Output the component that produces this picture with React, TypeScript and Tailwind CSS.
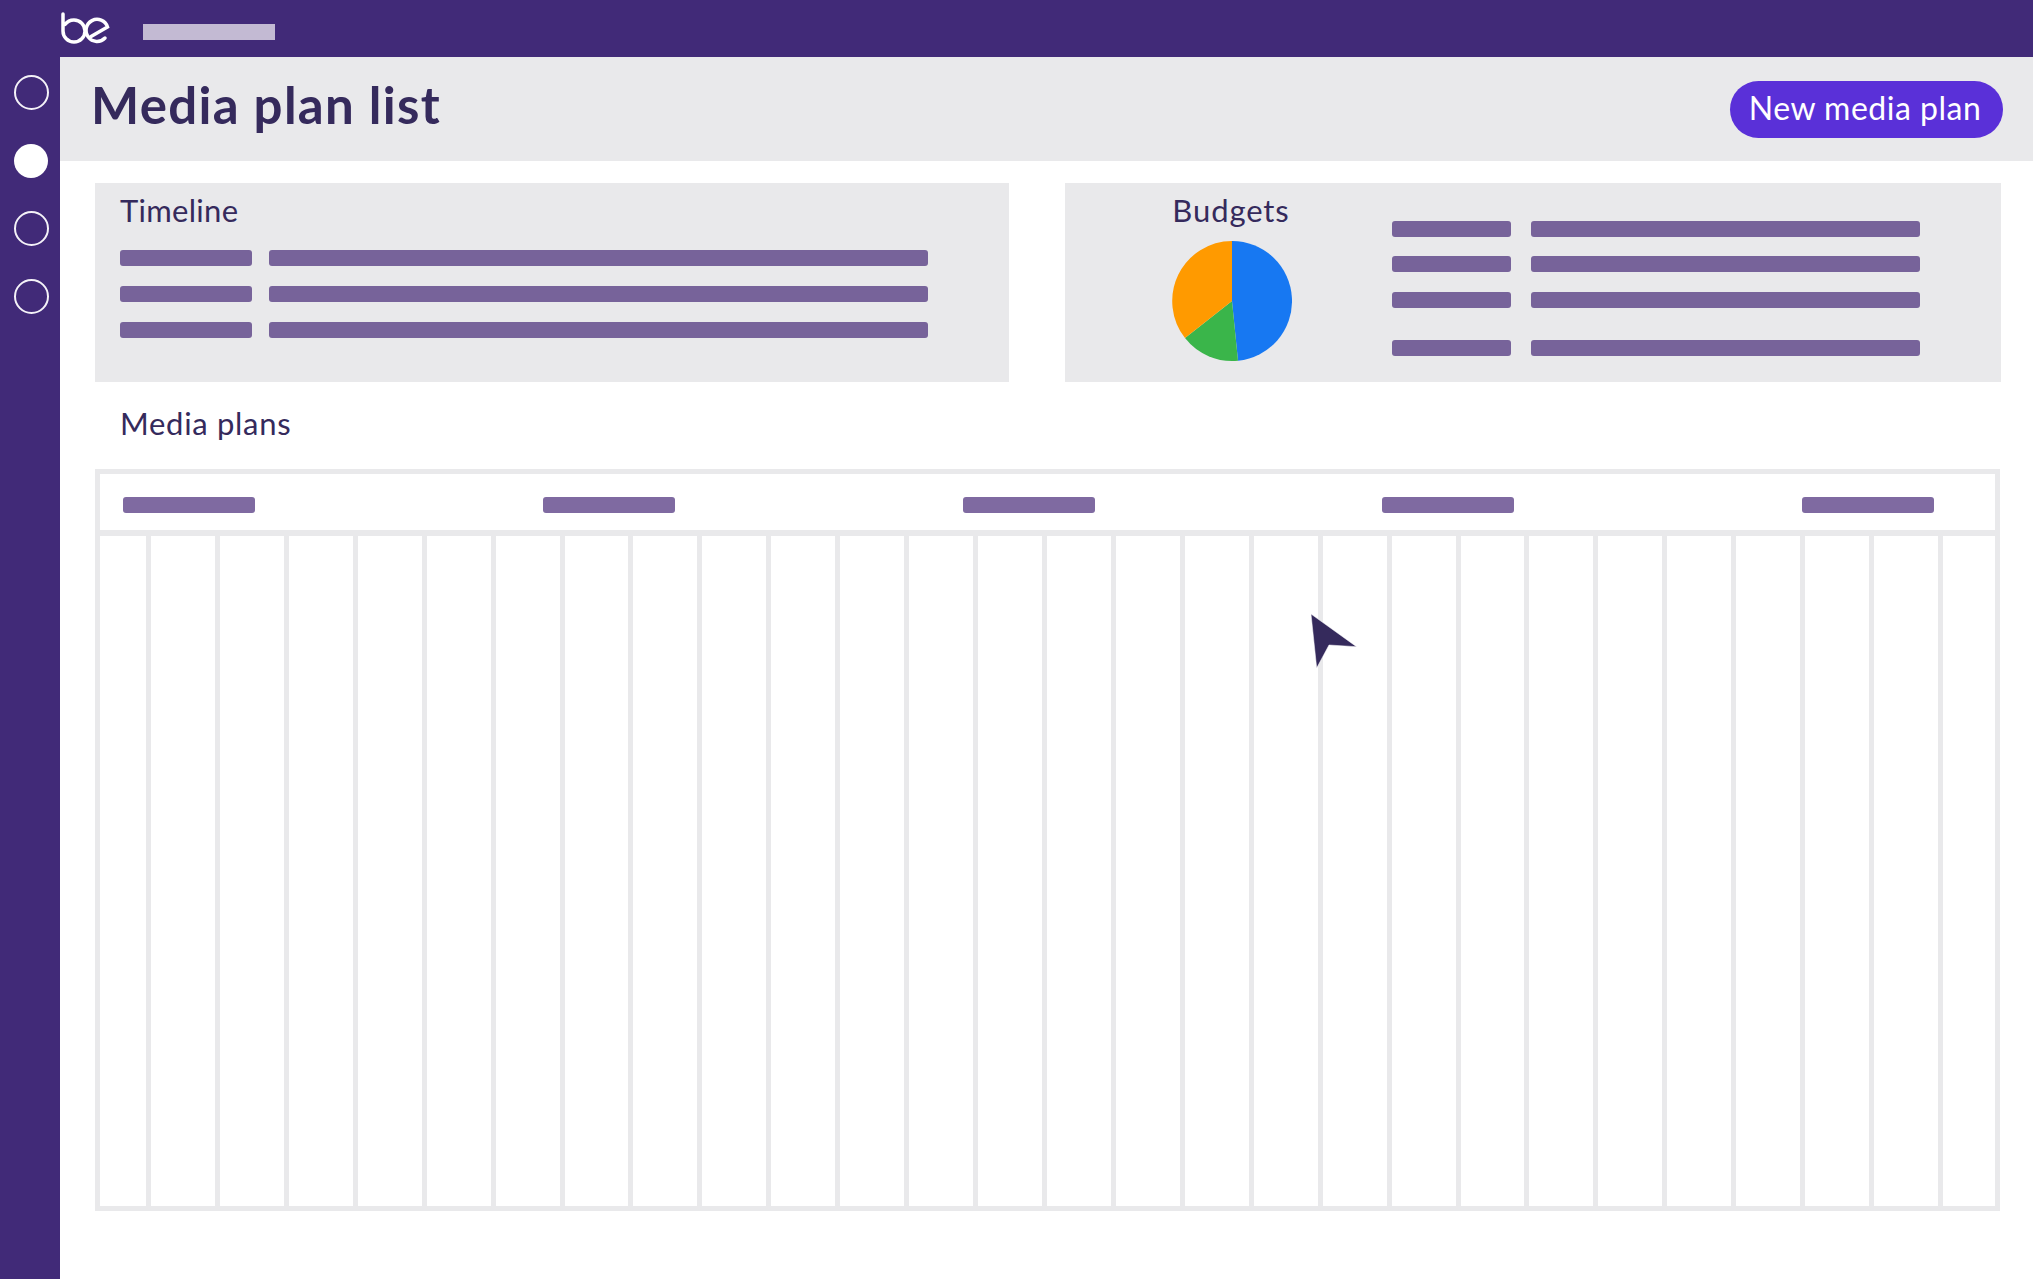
const cells = Array.from({ length: 28 }, (_, i) => i);
const headerBars = [0, 1, 2, 3, 4];

function Bar({ className }: { className: string }) {
  return <div className={`h-4 rounded-[3px] bg-[#77639a] ${className}`} />;
}

function Row({ first, second }: { first: string; second: string }) {
  return (
    <div className="flex">
      <Bar className={first} />
      <Bar className={second} />
    </div>
  );
}

function Logo() {
  return (
    <svg width="50" height="34" viewBox="0 0 50 34" fill="none" stroke="#ffffff" strokeWidth="3.5" strokeLinecap="round" className="block">
      <path d="M2 2 V19 A11 11 0 1 0 13 8 A11 11 0 0 0 4 12.5" />
      <path d="M30 24.5 L46.5 15 A11 11 0 1 0 44 26" />
    </svg>
  );
}

function Pie() {
  return (
    <svg width="120" height="120" viewBox="0 0 120 120" className="block">
      <path d="M60 60 L60 0 A60 60 0 0 1 66 119.7 Z" fill="#1778f2" />
      <path d="M60 60 L66 119.7 A60 60 0 0 1 13 97 Z" fill="#3ab54a" />
      <path d="M60 60 L13 97 A60 60 0 0 1 60 0 Z" fill="#ff9a00" />
    </svg>
  );
}

export default function App() {
  return (
    <div className="relative flex h-[1279px] w-full flex-col overflow-hidden bg-white font-['Lato',sans-serif] text-[#352a5c]">
      <header className="flex h-[57px] items-start bg-[#412a78] pl-[61px]">
        <div className="mt-[12px]">
          <Logo />
        </div>
        <div className="ml-[32px] mt-[24px] h-4 w-[132px] bg-[#c3bad3]" />
      </header>

      <div className="flex flex-1">
        <nav className="flex w-[60px] flex-col gap-[33px] bg-[#412a78] pl-[13.5px] pt-[18px]">
          <div className="size-[35px] rounded-full border-[2.5px] border-[#f4f2f8]" />
          <div className="m-[0.5px] size-[34px] rounded-full bg-white" />
          <div className="size-[35px] rounded-full border-[2.5px] border-[#f4f2f8]" />
          <div className="size-[35px] rounded-full border-[2.5px] border-[#f4f2f8]" />
        </nav>

        <main className="flex-1">
          <div className="flex h-[104px] items-center justify-between bg-[#e9e9eb] pl-[31px] pr-[30px]">
            <h1 className="pb-[8px] text-[51px] leading-[60px] font-bold tracking-[1.3px]">Media plan list</h1>
            <button className="h-[57px] w-[273px] rounded-full bg-[#5a30d8] pb-[2px] pr-[3px] text-[32px] tracking-[0.5px] text-white">New media plan</button>
          </div>

          <div className="flex gap-[56px] pl-[35px] pr-[32px] pt-[22px]">
            <section className="h-[199px] w-[914px] bg-[#e9e9eb] pl-[25px] pt-[8px]">
              <h2 className="text-[31px] leading-[38px] tracking-[0.3px]">Timeline</h2>
              <div className="mt-[21px] flex flex-col gap-5">
                <Row first="w-[132px]" second="ml-[17px] w-[659px]" />
                <Row first="w-[132px]" second="ml-[17px] w-[659px]" />
                <Row first="w-[132px]" second="ml-[17px] w-[659px]" />
              </div>
            </section>

            <section className="flex h-[199px] w-[936px] bg-[#e9e9eb] pl-[107px]">
              <div className="flex w-[120px] flex-col items-center">
                <h2 className="mr-[2px] mt-[8px] text-[31px] leading-[38px] tracking-[0.9px] whitespace-nowrap">Budgets</h2>
                <div className="mt-[12px]">
                  <Pie />
                </div>
              </div>
              <div className="ml-[100px] flex flex-col pt-[38px]">
                <Row first="w-[119px]" second="ml-[20px] w-[389px]" />
                <Row first="mt-[19px] w-[119px]" second="ml-[20px] mt-[19px] w-[389px]" />
                <Row first="mt-5 w-[119px]" second="ml-[20px] mt-5 w-[389px]" />
                <Row first="mt-8 w-[119px]" second="ml-[20px] mt-8 w-[389px]" />
              </div>
            </section>
          </div>

          <h2 className="pl-[60px] pt-[22px] text-[31px] leading-[38px] tracking-[0.7px]">Media plans</h2>

          <div className="ml-[35px] mt-[27px] h-[742px] w-[1905px] bg-[#e9e9eb] p-[5px]">
            <div className="flex h-[56px] items-start justify-between bg-white pl-[23px] pr-[61px] pt-[23px]">
              {headerBars.map((b) => (
                <div key={b} className="h-4 w-[132px] rounded-[3px] bg-[#7f6aa1]" />
              ))}
            </div>
            <div className="mt-[6px] grid h-[670px] grid-cols-[46px_repeat(26,1fr)_52px] gap-[5px]">
              {cells.map((c) => (
                <div key={c} className="bg-white" />
              ))}
            </div>
          </div>
        </main>
      </div>

      <svg width="48" height="56" viewBox="0 0 48 56" className="absolute left-[1310px] top-[613px]">
        <path d="M1 1 L46.5 33.7 L19 32 L6.7 55 Z" fill="#352a5c" stroke="#ffffff" strokeWidth="0.5" />
      </svg>
    </div>
  );
}
